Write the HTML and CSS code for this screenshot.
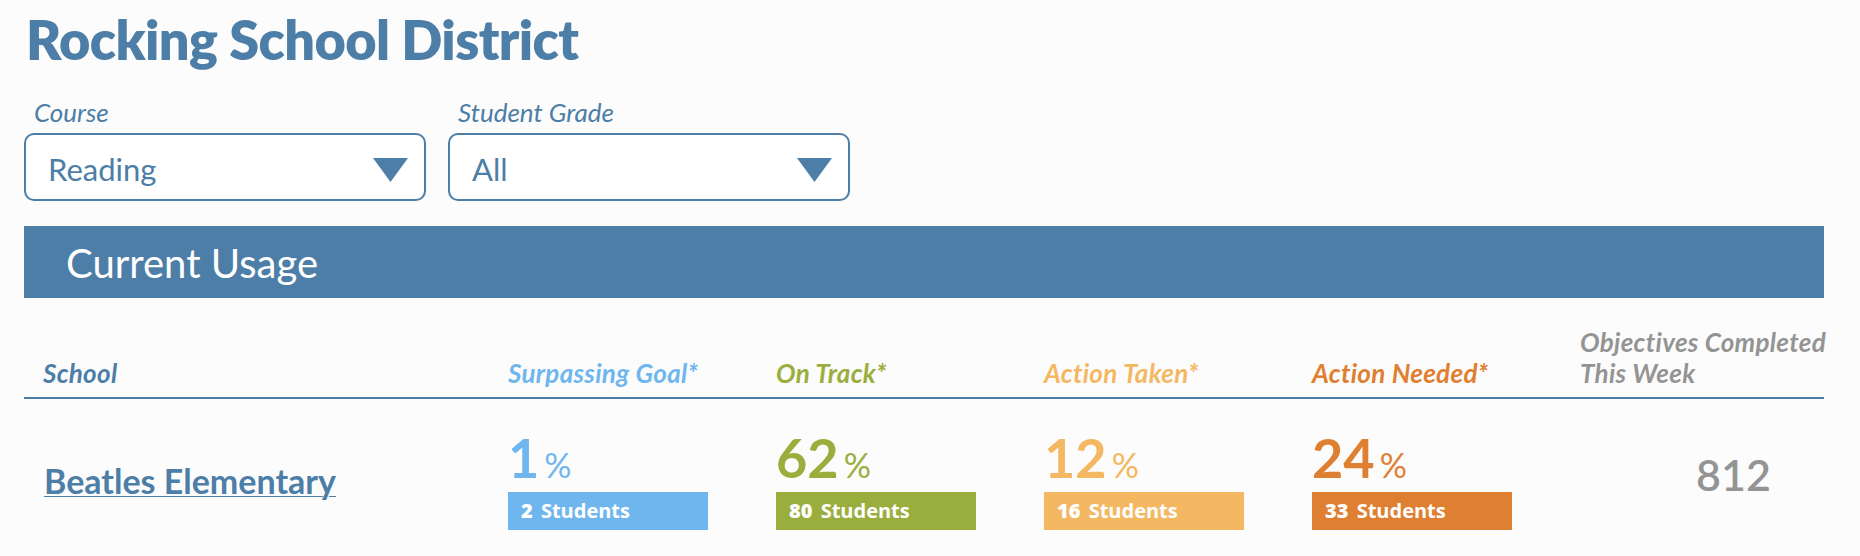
FILE: index.html
```html
<!DOCTYPE html>
<html lang="en">
<head>
  <meta charset="UTF-8">
  <meta name="viewport" content="width=device-width, initial-scale=1.0">
  <title>Rocking School District - Current Usage</title>
  <link rel="stylesheet" href="styles.css">
</head>
<body>

  <div class="page">
    <h1 class="title">Rocking School District</h1>

    <div class="filters">
      <div class="filter">
        <label class="filter-label">Course</label>
        <div class="select">
          <span class="select-value">Reading</span>
          <svg class="select-arrow" width="35" height="24" viewBox="0 0 35 24"><polygon points="0,0 35,0 17.5,24" fill="#4c7ea7"/></svg>
        </div>
      </div>
      <div class="filter">
        <label class="filter-label">Student Grade</label>
        <div class="select">
          <span class="select-value">All</span>
          <svg class="select-arrow" width="35" height="24" viewBox="0 0 35 24"><polygon points="0,0 35,0 17.5,24" fill="#4c7ea7"/></svg>
        </div>
      </div>
    </div>

    <div class="section-bar">Current Usage</div>

    <div class="usage-head">
      <div class="head-cell school">School</div>
      <div class="head-cell surpassing">Surpassing Goal*</div>
      <div class="head-cell on-track">On Track*</div>
      <div class="head-cell taken">Action Taken*</div>
      <div class="head-cell needed">Action Needed*</div>
      <div class="head-cell objectives">Objectives Completed<br>This Week</div>
    </div>

    <div class="usage-row">
      <div class="school-cell"><a href="#" class="school-link">Beatles Elementary</a></div>
      <div class="stat surpassing">
        <div class="stat-pct">1<span class="pct-sign">%</span></div>
        <div class="stat-bar"><b>2</b> Students</div>
      </div>
      <div class="stat on-track">
        <div class="stat-pct">62<span class="pct-sign">%</span></div>
        <div class="stat-bar"><b>80</b> Students</div>
      </div>
      <div class="stat taken">
        <div class="stat-pct">12<span class="pct-sign">%</span></div>
        <div class="stat-bar"><b>16</b> Students</div>
      </div>
      <div class="stat needed">
        <div class="stat-pct">24<span class="pct-sign">%</span></div>
        <div class="stat-bar"><b>33</b> Students</div>
      </div>
      <div class="objectives-count">812</div>
    </div>
  </div>

</body>
</html>
```

FILE: styles.css
```css
body {
  margin: 0;
  padding: 0;
  background-color: #fcfcfc;
  font-family: Lato, "Open Sans", sans-serif;
  color: #4c7ea7;
}

.page {
  padding: 8px 36px 0 24px;
}

.title {
  margin: 0 0 0 2px;
  font-size: 54px;
  line-height: 64px;
  font-weight: 800;
  letter-spacing: -0.6px;
}

/* filters */

.filters {
  display: flex;
  gap: 22px;
  margin-top: 25px;
}

.filter-label {
  display: block;
  padding-left: 10px;
  margin-bottom: 6px;
  font-size: 26px;
  line-height: 30px;
  font-style: italic;
  font-weight: normal;
}

.select {
  display: flex;
  align-items: center;
  justify-content: space-between;
  width: 402px;
  height: 68px;
  box-sizing: border-box;
  padding: 0 16px 0 22px;
  border: 2px solid #4c7ea7;
  border-radius: 10px;
  background-color: #fff;
}

.select-value {
  margin-top: 4px;
  font-size: 31px;
  line-height: 40px;
}

.select-arrow {
  margin-top: 6px;
}

/* current usage */

.section-bar {
  margin-top: 25px;
  height: 72px;
  box-sizing: border-box;
  padding: 3px 0 0 42px;
  background-color: #4c7ea7;
  color: #fff;
  font-size: 40px;
  line-height: 69px;
}

.usage-head,
.usage-row {
  display: grid;
  grid-template-columns: 484px repeat(4, 268px) 244px;
}

.usage-head {
  align-items: end;
  margin-top: 29px;
  padding-bottom: 8px;
  border-bottom: 2px solid #4c7ea7;
}

.head-cell {
  font-size: 26px;
  line-height: 31px;
  font-weight: bold;
  font-style: italic;
  letter-spacing: 0.3px;
  white-space: nowrap;
}

.head-cell.school {
  padding-left: 19px;
}

.surpassing { color: #70b6ee; }
.on-track { color: #9aae3e; }
.taken { color: #f4b862; }
.needed { color: #df7f31; }
.objectives { color: #949494; }

.usage-row {
  align-items: center;
  padding: 31px 0 25px;
}

.school-cell {
  padding-left: 20px;
}

.school-link {
  color: #4c7ea7;
  font-size: 34px;
  font-weight: bold;
  text-decoration: underline;
  text-decoration-thickness: 1px;
  text-underline-offset: 2px;
}

.stat-pct {
  margin-bottom: 6px;
  font-size: 54px;
  line-height: 56px;
  font-weight: bold;
}

.pct-sign {
  margin-left: 5px;
  font-size: 34px;
  line-height: 1;
  font-weight: normal;
}

.stat-bar {
  width: 200px;
  height: 38px;
  box-sizing: border-box;
  padding-left: 13px;
  color: #fff;
  font-family: "Open Sans", sans-serif;
  font-size: 20px;
  font-weight: bold;
  line-height: 38px;
}

.stat-bar b {
  margin-right: 3px;
}

.surpassing .stat-bar { background-color: #70b6ee; }
.on-track .stat-bar { background-color: #9aae3e; }
.taken .stat-bar { background-color: #f4b862; }
.needed .stat-bar { background-color: #df7f31; }

.objectives-count {
  padding-left: 116px;
  margin-bottom: 12px;
  color: #949494;
  font-size: 43px;
  font-weight: 600;
}
```
